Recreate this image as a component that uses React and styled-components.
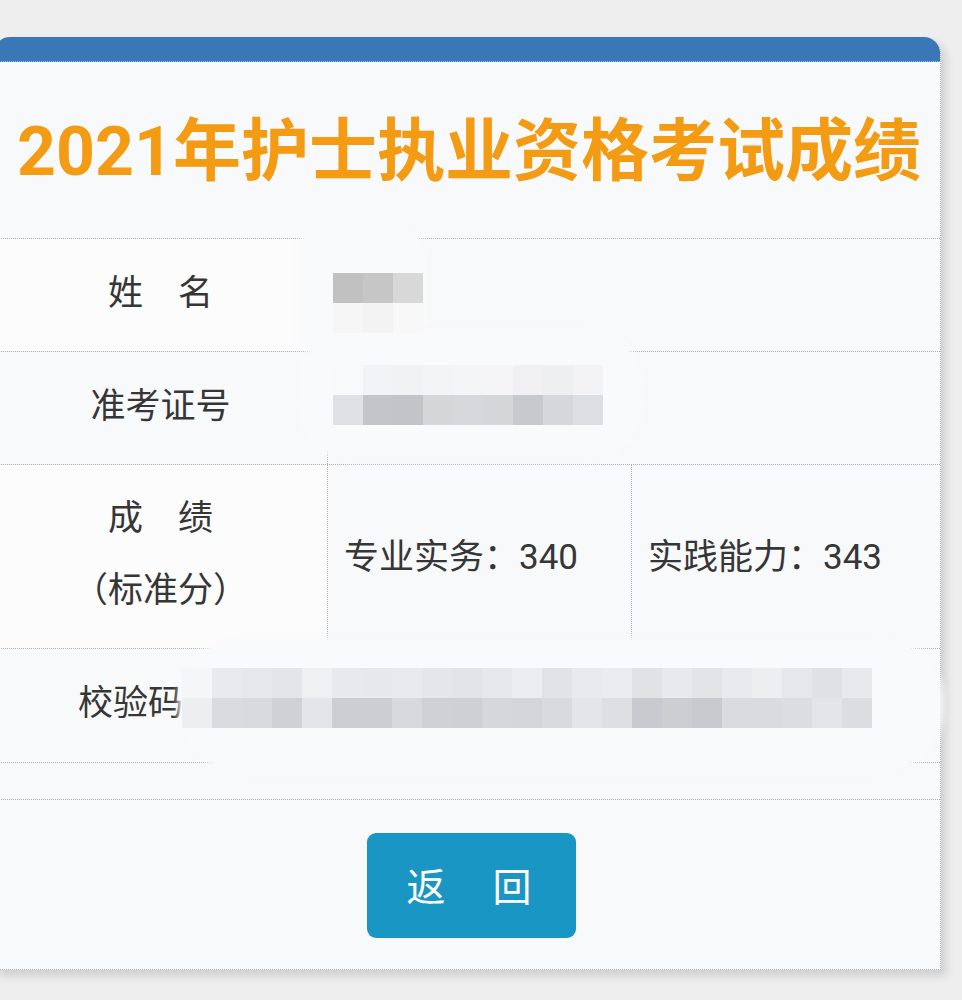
import React from 'react';
import styled, { createGlobalStyle } from 'styled-components';

const Global = createGlobalStyle`
  html, body { margin: 0; padding: 0; background: #ededed; }
  body { font-family: Roboto, "Noto Sans CJK SC", "Noto Sans", sans-serif; overflow: hidden; }
`;

const LINE = '#a9aeb6';

const Page = styled.div`
  width: 962px;
  height: 1000px;
  padding-top: 37px;
  box-sizing: border-box;
  overflow: hidden;
  background: #eeeeee;
`;

const Card = styled.div`
  box-sizing: border-box;
  width: 947px;
  margin-left: -6px;
  background: #f8f9fb;
  border-radius: 16px 16px 0 0;
  border-right: 1px dotted ${LINE};
  border-bottom: 1px dotted ${LINE};
  box-shadow: 5px 6px 10px rgba(0, 0, 0, 0.13);
`;

const Header = styled.div`
  height: 25px;
  box-sizing: border-box;
  background: #3a77b7;
  border-radius: 16px 16px 0 0;
  border-bottom: 1px dotted #9fbde0;
`;

const Title = styled.h1`
  margin: 0;
  height: 176px;
  display: flex;
  align-items: center;
  justify-content: center;
  white-space: nowrap;
  font-family: Roboto, "Noto Sans CJK SC", sans-serif;
  font-size: 68px;
  font-weight: 700;
  letter-spacing: 0;
  color: #f39b12;
  padding: 0 0 10px 4px;
  box-sizing: border-box;
`;

const Table = styled.div`
  position: relative;
`;

const Row = styled.div`
  display: grid;
  grid-template-columns: 334px 303px 1fr;
  height: ${p => p.$h}px;
  box-sizing: border-box;
  border-top: 1px dotted ${LINE};
  ${p => p.$last && `border-bottom: 1px dotted ${LINE};`}
`;

const Label = styled.div`
  display: flex;
  flex-direction: column;
  align-items: ${p => (p.$left ? 'flex-start' : 'center')};
  justify-content: center;
  padding-left: ${p => (p.$left ? '84px' : '0')};
  padding-bottom: 3px;
  border-right: 1px dotted ${LINE};
  background: ${p => (p.$bright ? '#fcfcfd' : 'transparent')};
  font-size: 35px;
  color: #363636;
  line-height: 72px;
`;

const Value = styled.div`
  grid-column: ${p => (p.$span ? '2 / 4' : 'auto')};
  display: flex;
  align-items: center;
  padding-left: 16px;
  padding-bottom: 6px;
  font-size: 35px;
  color: #363636;
  ${p => p.$divided && `border-left: 1px dotted ${LINE};`}
`;

const Footer = styled.div`
  height: 169px;
  display: flex;
  align-items: center;
  justify-content: center;
`;

const Button = styled.button`
  width: 209px;
  height: 105px;
  border: none;
  border-radius: 9px;
  background: #1a96c4;
  color: #fff;
  font-family: "Noto Sans CJK SC", sans-serif;
  font-size: 39px;
  letter-spacing: 4px;
  padding: 0 0 4px 0;
  margin-left: 8px;
  margin-top: 2px;
`;

const Smudge = styled.div`
  position: absolute;
  left: ${p => p.$x}px;
  top: ${p => p.$y}px;
  width: ${p => p.$w}px;
  height: ${p => p.$h}px;
  border-radius: ${p => p.$r}px;
  background: #f9fafc;
  box-shadow: 0 0 6px 4px rgba(249, 250, 252, 0.9);
`;

const Pixels = styled.div`
  position: absolute;
  left: ${p => p.$x}px;
  top: ${p => p.$y}px;
  display: grid;
  grid-template-columns: repeat(${p => p.$cols}, 30px);
  grid-auto-rows: 30px;
`;

const Px = styled.div`
  background: ${p => p.$c};
`;

const nameBlocks = [
  '#c1c1c2', '#c6c6c7', '#d8d8d9',
  '#f6f6f6', '#f3f3f4', '#f8f8f8',
];

const idBlocks = [
  '#f8f9fb', '#f1f3f6', '#f1f2f4', '#f3f4f6', '#f4f5f7', '#f5f5f7', '#f1f1f3', '#eeeff1', '#f3f3f5',
  '#dfe1e4', '#c4c5c9', '#c3c4c8', '#d5d6d8', '#d7d8db', '#d5d6d8', '#c8c9cd', '#d6d7da', '#dcdee1',
];

const codeTop = [
  '#f4f6f8', '#e9eaed', '#e6e7ea', '#e4e5e8', '#eff0f2', '#e8e9ec', '#e7e8eb', '#e9eaed',
  '#e5e6e9', '#e3e4e7', '#e6e7ea', '#ecedf0', '#e2e3e6', '#e9eaed', '#ebecef', '#e1e2e5',
  '#e8e9ec', '#e3e4e7', '#e9eaed', '#eceef0', '#e6e7ea', '#e0e1e4', '#e8e9ec',
];
const codeBottom = [
  '#eceef0', '#dadbdf', '#d9dade', '#d0d1d5', '#e4e5e8', '#cdced2', '#cdced2', '#d8d9dc',
  '#d0d1d5', '#cfd0d4', '#d6d7da', '#d4d5d8', '#d9dadd', '#e4e5e8', '#dedfe2', '#c9cacf',
  '#cdced2', '#c9cacf', '#dadbdf', '#dadbdf', '#dcdde0', '#e4e5e8', '#dcdde0',
];

export default function App() {
  return (
    <Page>
      <Global />
      <Card>
        <Header />
        <Title>2021年护士执业资格考试成绩</Title>
        <Table>
          <Row $h={113}>
            <Label $bright>姓　名</Label>
            <Value $span />
          </Row>
          <Row $h={113}>
            <Label>准考证号</Label>
            <Value $span />
          </Row>
          <Row $h={184}>
            <Label $bright>
              <span>成　绩</span>
              <span>（标准分）</span>
            </Label>
            <Value>专业实务：340</Value>
            <Value $divided>实践能力：343</Value>
          </Row>
          <Row $h={114}>
            <Label $left>校验码</Label>
            <Value $span />
          </Row>
          <Row $h={38} $last>
            <span />
          </Row>

          <Smudge $x={306} $y={-10} $w={122} $h={124} $r={26} />
          <Smudge $x={306} $y={96} $w={340} $h={122} $r={50} />
          <Pixels $x={339} $y={35} $cols={3}>
            {nameBlocks.map((c, i) => <Px key={i} $c={c} />)}
          </Pixels>
          <Pixels $x={339} $y={127} $cols={9}>
            {idBlocks.map((c, i) => <Px key={i} $c={c} />)}
          </Pixels>

          <Smudge $x={188} $y={402} $w={758} $h={130} $r={60} />
          <Pixels $x={188} $y={430} $cols={23}>
            {codeTop.map((c, i) => <Px key={'t' + i} $c={c} />)}
            {codeBottom.map((c, i) => <Px key={'b' + i} $c={c} />)}
          </Pixels>
        </Table>
        <Footer>
          <Button>返　回</Button>
        </Footer>
      </Card>
    </Page>
  );
}
